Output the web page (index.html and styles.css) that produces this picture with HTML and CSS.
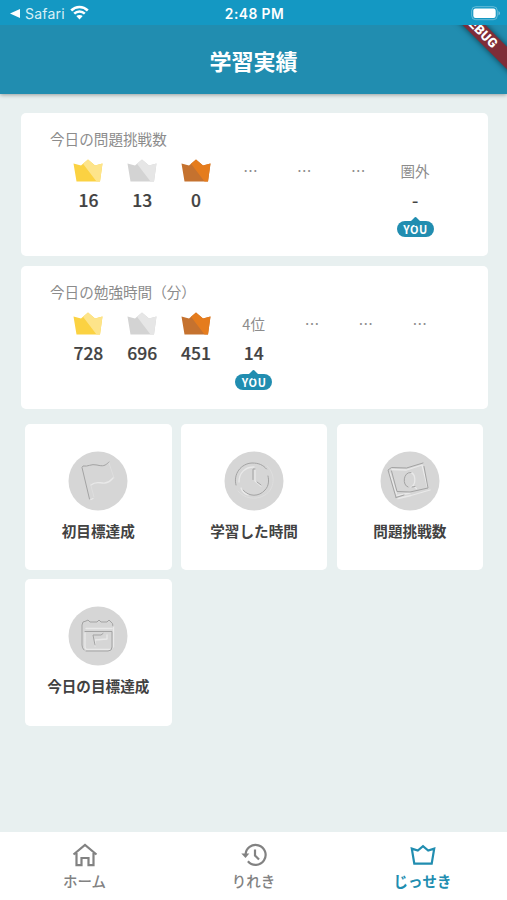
FILE: index.html
```html
<!DOCTYPE html>
<html lang="ja">
<head>
<meta charset="utf-8">
<title>学習実績</title>
<link rel="stylesheet" href="styles.css">
</head>
<body>
<svg class="defs" aria-hidden="true">
  <symbol id="gold" viewBox="0 0 30 23"><path fill="#fbd242" d="M.5 4.500 8 6.500l7-6 7 6 7.500-2L27 22.500H3.500z"/><path fill="#fde48a" d="m15 .5 7 6 7.500-2L27 22.500h-3.500L10 4.800z"/></symbol>
  <symbol id="silver" viewBox="0 0 30 23"><path fill="#d3d3d3" d="M.5 4.500 8 6.500l7-6 7 6 7.500-2L27 22.500H3.500z"/><path fill="#e6e6e6" d="m15 .5 7 6 7.500-2L27 22.500h-3.500L10 4.800z"/></symbol>
  <symbol id="bronze" viewBox="0 0 30 23"><path fill="#c5722f" d="M.5 4.500 8 6.500l7-6 7 6 7.500-2L27 22.500H3.500z"/><path fill="#e57c1d" d="m15 .5 7 6 7.500-2L27 22.500h-3.500L10 4.800z"/></symbol>
</svg>
<div class="app">
  <div class="status">
    <div class="back"><svg width="10" height="9" viewBox="0 0 10 9"><path fill="#fff" d="M0 4.500 10 0v9z"/></svg><span>Safari</span>
      <svg class="wifi" width="19" height="15" viewBox="0 0 19 15"><g fill="none" stroke="#fff" stroke-width="2.500"><path d="M1.200 5.500c4.700-4.700 11.900-4.700 16.600 0M4.200 8.700c3-3 7.600-3 10.600 0"/></g><path fill="#fff" d="M6.300 11.100c1.900-1.600 4.500-1.600 6.400 0L9.500 14.500z"/></svg>
    </div>
    <div class="clock">2:48 PM</div>
    <svg class="battery" width="30" height="15" viewBox="0 0 30 15"><rect x=".7" y=".7" width="25.600" height="13" rx="4" fill="none" stroke="#fff" stroke-opacity=".35"/><rect x="2.300" y="2.500" width="22.400" height="9.400" rx="2.200" fill="#fff"/><path fill="#fff" fill-opacity=".45" d="M27.500 5c2 .8 2 3.600 0 4.400z"/></svg>
  </div>
  <header class="header"><h1>学習実績</h1><div class="debug"><span>DEBUG</span></div></header>

  <main>
    <section class="rank">
      <h2>今日の問題挑戦数</h2>
      <div class="cols">
        <div class="col"><svg class="crown"><use href="#gold"/></svg><b>16</b></div>
        <div class="col"><svg class="crown"><use href="#silver"/></svg><b>13</b></div>
        <div class="col"><svg class="crown"><use href="#bronze"/></svg><b>0</b></div>
        <div class="col"><span class="place dots">…</span></div>
        <div class="col"><span class="place dots">…</span></div>
        <div class="col"><span class="place dots">…</span></div>
        <div class="col me"><span class="place">圏外</span><b>-</b><span class="you">YOU</span></div>
      </div>
    </section>
    <section class="rank">
      <h2>今日の勉強時間（分）</h2>
      <div class="cols">
        <div class="col"><svg class="crown"><use href="#gold"/></svg><b>728</b></div>
        <div class="col"><svg class="crown"><use href="#silver"/></svg><b>696</b></div>
        <div class="col"><svg class="crown"><use href="#bronze"/></svg><b>451</b></div>
        <div class="col me"><span class="place">4位</span><b>14</b><span class="you">YOU</span></div>
        <div class="col"><span class="place dots">…</span></div>
        <div class="col"><span class="place dots">…</span></div>
        <div class="col"><span class="place dots">…</span></div>
      </div>
    </section>

    <section class="tiles">
      <article class="tile">
        <svg class="medal" viewBox="0 0 60 60"><circle cx="30" cy="30" r="29.500"/>
          <path class="lo" d="M21.500 48 14 16.500l1-1.500c5 1 8-2.500 14-1s8 1 12-3"/>
          <path class="hi" d="M23 48.500 25 47.500M23 34c5-4.500 9-1.500 14-2s6-3 8.500-5.500"/>
          <path class="faint" d="M41 12l5 15M26 46l-3.500-13"/>
        </svg>
        <h3>初目標達成</h3>
      </article>
      <article class="tile">
        <svg class="medal" viewBox="0 0 60 60"><circle cx="30" cy="30" r="29.500"/>
          <path class="faint" d="M43 15c9 8 8 23-2 29-10 6-21 3-27-4"/>
          <path class="lo" d="M12 34C9 23 17 12.500 28 12c7 0 11 2 14.500 6M19 39c6 7 16 7 22 0 4-4 4-10 3-14"/>
          <path class="hi" d="M15 31c0-9 6-15 15-15M31 19v11l6 5M17 37c1 3 4 6 7 7"/>
          <path class="lo" d="M29 28.500V18h2M33 31l4 3"/>
        </svg>
        <h3>学習した時間</h3>
      </article>
      <article class="tile">
        <svg class="medal" viewBox="0 0 60 60"><circle cx="30" cy="30" r="29.500"/>
          <path class="hi" d="m12 18.500 14.500.5L42 14l5.500 22M17 44.500l13-2.500M18 47.500l13-3 19-5.500M10 22l6.500 21"/>
          <path class="lo" d="m16 46.500-8-27.500 3.500-2.500L26.500 17 43 12M44 15.500l4 21.500-18 4-13-.5L11.500 20M16 46.500 24 44"/>
          <path class="hi" d="M30 21.500c6 .5 6.500 12 1 14.500M33 34.500l3.500 3"/>
          <path class="lo" d="M31 21.500c-8-1-9 13-3 14.500M32 36l3-.5"/>
        </svg>
        <h3>問題挑戦数</h3>
      </article>
      <article class="tile">
        <svg class="medal" viewBox="0 0 60 60"><circle cx="30" cy="30" r="29.500"/>
          <path class="hi" d="M18 22.500h26M17 27v14q0 2.500 3 2.500h22M45.500 20v21M27 40v-6l12-1v-4"/>
          <path class="lo" d="M16 44q-2-2-2-5V19q0-4 4-4l2-1 2 2h7l2-2 2 2h6l2-2 2 2q2 1 2 4M17 25.500h27V41q0 4-4 4H18M27 39l-2-10h8l2-1.500"/>
        </svg>
        <h3>今日の目標達成</h3>
      </article>
    </section>
  </main>

  <nav class="tabs">
    <a class="tab"><svg viewBox="0 0 26 24"><path d="M1.500 11.500 13 2l11.500 9.500M4.500 10v12.200h5V15h7v7.200h5V10"/></svg><span>ホーム</span></a>
    <a class="tab"><svg viewBox="0 0 26 24"><path d="M4.600 12A10 10 0 1 1 6.900 18.300M14 6.500v6l4 4"/><path class="solid" d="M.3 10.500h8l-3.800 4.500z"/></svg><span>りれき</span></a>
    <a class="tab active"><svg viewBox="0 0 26 24"><path d="m1.800 5.600 6 1.900L13 3.200l5.200 4.300 6-1.900-2.500 15.100H4.300z"/></svg><span>じっせき</span></a>
  </nav>
</div>
</body>
</html>
```
FILE: styles.css
```css
* { box-sizing: border-box; }
body { margin: 0; font-family: "Noto Sans CJK JP", sans-serif; color: #424242; }
h1, h2, h3 { margin: 0; }
.defs { position: absolute; width: 0; height: 0; }
.app { width: 507px; height: 900px; display: flex; flex-direction: column; background: #e8f0f0; overflow: hidden; }

.status { height: 25px; flex: none; display: grid; grid-template-columns: 1fr auto 1fr; align-items: center; padding: 2px 6px 0 10px; background: #1498c3; color: #fff; font-family: Inter, sans-serif; }
.back { display: flex; align-items: center; font-size: 14px; letter-spacing: .2px; line-height: 20px; }
.back span { margin: 0 5px 0 5px; color: #d9f0f7; }
.wifi { margin-top: -2px; }
.clock { font-size: 13.800px; font-weight: 600; letter-spacing: .45px; line-height: 20px; margin-right: 2px; }
.battery { justify-self: end; }

.header { position: relative; z-index: 1; height: 69px; flex: none; display: flex; align-items: center; justify-content: center; background: #218db0; box-shadow: 0 1px 4px rgba(0, 0, 0, .35); clip-path: inset(0 0 -8px 0); }
.header h1 { color: #fff; font-size: 22px; line-height: 32px; font-weight: 700; padding-top: 1px; }
.debug { position: absolute; top: 0; right: 0; width: 70px; height: 69px; overflow: hidden; }
.debug span { position: absolute; left: -12px; top: -2px; width: 110px; height: 16px; transform: rotate(45deg); background: #7f2d38; color: #fff; box-shadow: 0 0 6px rgba(0, 0, 0, .6); text-align: center; font: 900 13px/16px Roboto, sans-serif; letter-spacing: .3px; }

main { flex: 1; padding: 19px 20px 0 20.500px; display: flex; flex-direction: column; gap: 10px; }
.rank { width: 467px; height: 143px; padding: 15px 0 0 29.500px; background: #fff; border-radius: 5px; }
.rank h2 { font-size: 14.600px; line-height: 22px; font-weight: 400; color: #8c8c8c; }
.cols { display: flex; padding: 7px 0 0 11.500px; }
.col { width: 53.800px; display: flex; flex-direction: column; align-items: center; }
.col.me { width: 61.500px; }
.crown { width: 30px; height: 23px; margin: 2px 0; }
.place { height: 27px; line-height: 27px; font-size: 14.500px; color: #8c8c8c; }
.dots { padding-left: 1.500px; }
.col b { font-size: 17.500px; line-height: 24px; font-weight: 500; -webkit-text-stroke: .2px #424242; margin-top: 4px; }
.you { position: relative; width: 37px; height: 16px; margin-top: 8.500px; padding-left: 1px; border-radius: 8px; background: #218db0; color: #fff; font-size: 11px; line-height: 16px; font-weight: 700; letter-spacing: .6px; text-align: center; }
.you::before { content: ""; position: absolute; left: 15px; top: -3px; width: 7px; height: 7px; background: #218db0; transform: rotate(45deg); border-radius: 1px; }

.tiles { display: grid; grid-template-columns: repeat(3, 146.500px); gap: 9px 9.300px; padding: 4.500px 0 0 4.500px; }
.tile { height: 146.500px; display: flex; flex-direction: column; align-items: center; background: #fff; border-radius: 5px; }
.medal { width: 60px; height: 60px; margin-top: 27px; }
.medal > circle:first-child { fill: #d6d6d6; }
.medal .lo, .medal .hi, .medal .faint { fill: none; stroke-linejoin: round; stroke-linecap: round; }
.medal .lo { stroke: #a3a3a3; stroke-width: 1; }
.medal .hi { stroke: #e9e9e9; stroke-width: 1.300; }
.medal .faint { stroke: #dedede; stroke-width: 1; }
.tile h3 { margin-top: 8px; font-size: 14.600px; line-height: 24px; font-weight: 700; }

.tabs { height: 68px; flex: none; display: grid; grid-template-columns: repeat(3, 1fr); background: #fff; }
.tab { display: flex; flex-direction: column; align-items: center; padding-top: 11px; color: #828282; }
.tab svg { width: 26px; height: 24px; fill: none; stroke: currentColor; stroke-width: 2.200; }
.tab .solid { fill: currentColor; stroke: none; }
.tab span { margin-top: 3px; font-size: 14.500px; line-height: 22px; font-weight: 500; }
.tab.active { color: #218db0; }
.tab.active span { font-weight: 700; }
```
